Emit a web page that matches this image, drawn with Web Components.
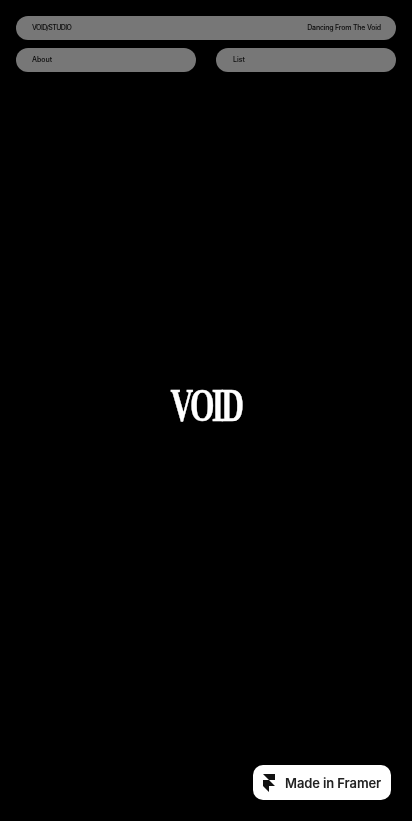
<!DOCTYPE html>
<html lang="en">
<head>
<meta charset="utf-8">
<title>VOID</title>
<style>
    html, body { margin: 0; height: 100%; background: #000; }
</style>
</head>
<body>
<void-page>
    <void-nav>
        <void-pill slot="top"><span style="letter-spacing: -0.6px">VOID/STUDIO</span><span slot="end" style="letter-spacing: -0.2px">Dancing From The Void</span></void-pill>
        <void-pill slot="left"><span>About</span></void-pill>
        <void-pill slot="right" style="padding-left: 17px"><span>List</span></void-pill>
    </void-nav>
    <void-logo>VOID</void-logo>
    <framer-badge>Made in Framer</framer-badge>
</void-page>

<script>
/**
 * The black page that holds the nav, the logo and the badge.
 */
class VoidPage extends HTMLElement {
    constructor() {
        super();

        this.$shadowDom = this.attachShadow({ mode: 'open' });
        this.$shadowDom.innerHTML = `
            <style>
                :host {
                    display: flex;
                    flex-direction: column;
                    box-sizing: border-box;
                    height: 100vh;
                    padding: 16px 16px 83px;
                    background: #000;
                    font-family: Inter, "Liberation Sans", sans-serif;
                }
            </style>
            <slot></slot>
        `;
    }
}

/**
 * Two rows of pills: one wide, then two side by side.
 */
class VoidNav extends HTMLElement {
    constructor() {
        super();

        this.$shadowDom = this.attachShadow({ mode: 'open' });
        this.$shadowDom.innerHTML = `
            <style>
                :host {
                    display: grid;
                    grid-template-columns: 1fr 1fr;
                    gap: 8px 20px;
                }
                .top { grid-column: 1 / -1; display: grid; }
                .side { display: grid; }
            </style>
            <div class="top"><slot name="top"></slot></div>
            <div class="side"><slot name="left"></slot></div>
            <div class="side"><slot name="right"></slot></div>
        `;
    }
}

/**
 * A grey rounded bar with text at the start and, if given, at the end.
 */
class VoidPill extends HTMLElement {
    constructor() {
        super();

        this.$shadowDom = this.attachShadow({ mode: 'open' });
        this.$shadowDom.innerHTML = `
            <style>
                :host {
                    display: flex;
                    align-items: center;
                    justify-content: space-between;
                    box-sizing: border-box;
                    height: 24px;
                    padding: 0 15px 1px 16px;
                    border-radius: 12px;
                    background: #777;
                    color: #0c0c0c;
                    font-size: 7px;
                    font-weight: 500;
                    line-height: 1;
                    filter: blur(0.55px);
                }
            </style>
            <slot></slot>
            <slot name="end"></slot>
        `;
    }
}

/**
 * The big condensed wordmark in the middle of the page.
 */
class VoidLogo extends HTMLElement {
    constructor() {
        super();

        this.$shadowDom = this.attachShadow({ mode: 'open' });
        this.$shadowDom.innerHTML = `
            <style>
                :host {
                    flex: 1;
                    display: flex;
                    align-items: center;
                    justify-content: center;
                    color: #fff;
                    font-family: "Liberation Serif", serif;
                    font-weight: 700;
                    font-size: 47px;
                    line-height: 1;
                }
                span {
                    display: block;
                    letter-spacing: -4px;
                    -webkit-text-stroke: 0.5px #fff;
                    transform: scaleX(0.67);
                    filter: blur(0.5px);
                }
            </style>
            <span><slot></slot></span>
        `;
    }
}

/**
 * The white badge that floats in the bottom right corner.
 */
class FramerBadge extends HTMLElement {
    constructor() {
        super();

        this.$shadowDom = this.attachShadow({ mode: 'open' });
        this.$shadowDom.innerHTML = `
            <style>
                :host {
                    position: fixed;
                    right: 21px;
                    bottom: 21px;
                    display: flex;
                    align-items: center;
                    gap: 10px;
                    box-sizing: border-box;
                    width: 138px;
                    height: 35px;
                    padding-left: 10px;
                    border-radius: 10px;
                    background: #fff;
                    color: #222;
                    font-family: Inter, "Liberation Sans", sans-serif;
                    font-size: 13px;
                    font-weight: 600;
                    letter-spacing: -0.1px;
                    white-space: nowrap;
                    filter: blur(0.5px);
                }
                svg { width: 12px; height: 18px; flex: none; }
            </style>
            <svg viewBox="0 0 14 21" fill="#111"><path d="M0 0h14v7H7zM0 7h7l7 7H7v7l-7-7z"/></svg>
            <slot></slot>
        `;
    }
}

customElements.define('void-page', VoidPage);
customElements.define('void-nav', VoidNav);
customElements.define('void-pill', VoidPill);
customElements.define('void-logo', VoidLogo);
customElements.define('framer-badge', FramerBadge);
</script>
</body>
</html>
